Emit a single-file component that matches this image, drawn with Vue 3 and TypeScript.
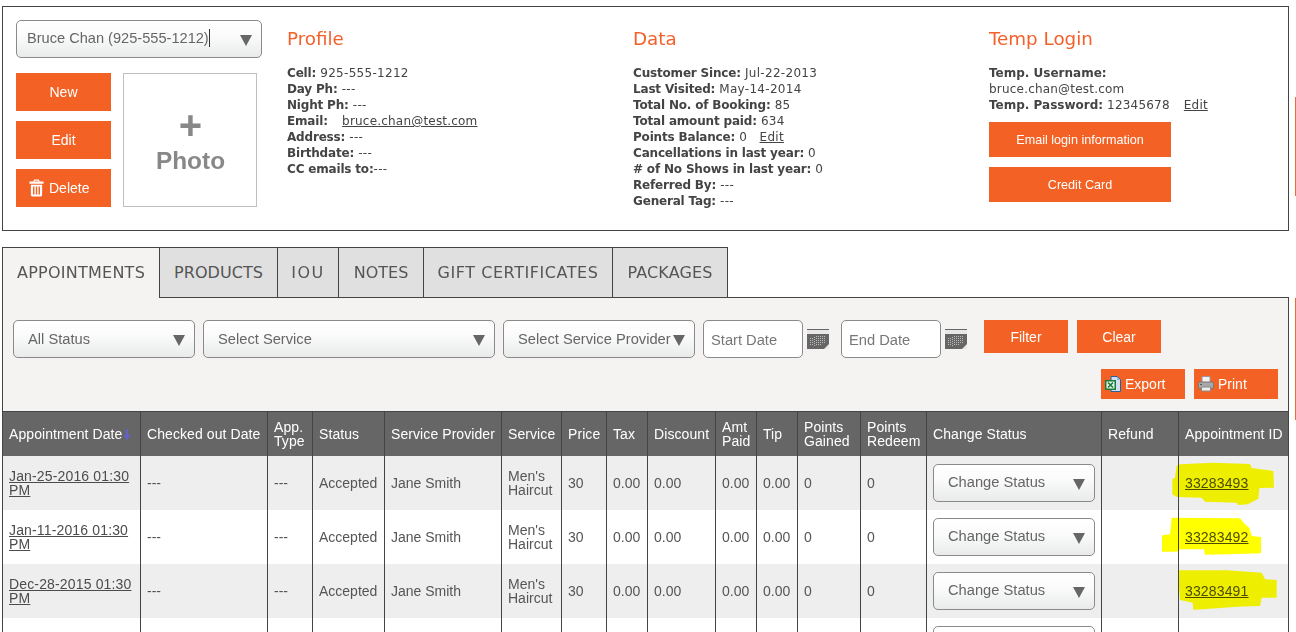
<script setup lang="ts">
const tabs = [
  { label: 'APPOINTMENTS', width: 158, spacing: 0.25 },
  { label: 'PRODUCTS', width: 118, spacing: 0.05 },
  { label: 'IOU', width: 61, spacing: 1.5 },
  { label: 'NOTES', width: 85, spacing: 0 },
  { label: 'GIFT CERTIFICATES', width: 189, spacing: 0.55 },
  { label: 'PACKAGES', width: 115, spacing: 0.1 },
]
const colWidths: number[] = [138, 127, 45, 72, 117, 60, 45, 41, 68, 41, 41, 63, 66, 175, 77, 109]
const rows = [
  { date: 'Jan-25-2016 01:30 PM', id: '33283493' },
  { date: 'Jan-11-2016 01:30 PM', id: '33283492' },
  { date: 'Dec-28-2015 01:30 PM', id: '33283491' },
]
</script>

<template>
  <div class="page">
    <span class="edge edge-a"></span>
    <span class="edge edge-b"></span>

    <section class="card">
      <div class="left">
        <div class="sel top-sel"><span class="sel-text">Bruce Chan (925-555-1212)<i class="caret"></i></span><span class="tri"></span></div>
        <div class="left-row">
          <div class="left-btns">
            <button class="btn side">New</button>
            <button class="btn side">Edit</button>
            <button class="btn side del">
              <svg class="trash" viewBox="0 0 16 18" width="15" height="18">
                <path fill="#fff" d="M5.500 0h5l1 2H15.500v2.500H.5V2h4zM2 5.500h12v11a1.500 1.500 0 0 1-1.500 1.500h-9A1.500 1.500 0 0 1 2 16.500z" />
                <path fill="#f4621f" d="M6 1.200h4l.4.8H5.600zM4.300 7.500h1.500v8.500H4.300zM7.250 7.500h1.500v8.500h-1.500zM10.200 7.500h1.500v8.500h-1.500z" />
              </svg>
              Delete
            </button>
          </div>
          <div class="photo"><span class="plus">+</span><span class="photo-label">Photo</span></div>
        </div>
      </div>

      <div class="info">
        <h2>Profile</h2>
        <p><b>Cell:</b> 925-555-1212</p>
        <p><b>Day Ph:</b> ---</p>
        <p><b>Night Ph:</b> ---</p>
        <p><b>Email:</b> &nbsp; <a class="mail">bruce.chan@test.com</a></p>
        <p><b>Address:</b> ---</p>
        <p><b>Birthdate:</b> ---</p>
        <p><b>CC emails to:</b>---</p>
      </div>

      <div class="info">
        <h2>Data</h2>
        <p><b>Customer Since:</b> Jul-22-2013</p>
        <p><b>Last Visited:</b> May-14-2014</p>
        <p><b>Total No. of Booking:</b> 85</p>
        <p><b>Total amount paid:</b> 634</p>
        <p><b>Points Balance:</b> 0 &nbsp; <a>Edit</a></p>
        <p><b>Cancellations in last year:</b> 0</p>
        <p><b># of No Shows in last year:</b> 0</p>
        <p><b>Referred By:</b> ---</p>
        <p><b>General Tag:</b> ---</p>
      </div>

      <div class="info temp">
        <h2>Temp Login</h2>
        <p><b>Temp. Username:</b></p>
        <p>bruce.chan@test.com</p>
        <p><b>Temp. Password:</b> 12345678 &nbsp; <a>Edit</a></p>
        <button class="btn login first">Email login information</button>
        <button class="btn login">Credit Card</button>
      </div>
    </section>

    <nav class="tabs">
      <div
        v-for="(t, i) in tabs"
        :key="t.label"
        class="tab"
        :class="{ active: i === 0 }"
        :style="{ width: t.width + 'px', letterSpacing: t.spacing + 'px' }"
      >{{ t.label }}</div>
    </nav>

    <section class="panel">
      <div class="filters">
        <div class="sel f1"><span class="sel-text">All Status</span><span class="tri"></span></div>
        <div class="sel f2"><span class="sel-text">Select Service</span><span class="tri"></span></div>
        <div class="sel f3"><span class="sel-text">Select Service Provider</span><span class="tri"></span></div>
        <input class="date" placeholder="Start Date" />
        <svg class="cal" viewBox="0 0 22 20" width="22" height="20">
          <rect width="22" height="20" fill="#666" />
          <rect y="1" width="22" height="4" fill="#e8e8e8" />
          <path stroke="#bbb" stroke-width="1" stroke-dasharray="1 1" d="M3.500 9v8M5.500 9v8M7.500 8v9M9.500 7v10M11.500 7v10M13.500 7v10M15.500 7v8M17.500 7v7" fill="none" />
          <path d="M22 15v5h-5z" fill="#e8e8e8" />
        </svg>
        <input class="date second" placeholder="End Date" />
        <svg class="cal" viewBox="0 0 22 20" width="22" height="20">
          <rect width="22" height="20" fill="#666" />
          <rect y="1" width="22" height="4" fill="#e8e8e8" />
          <path stroke="#bbb" stroke-width="1" stroke-dasharray="1 1" d="M3.500 9v8M5.500 9v8M7.500 8v9M9.500 7v10M11.500 7v10M13.500 7v10M15.500 7v8M17.500 7v7" fill="none" />
          <path d="M22 15v5h-5z" fill="#e8e8e8" />
        </svg>
        <button class="btn act filter">Filter</button>
        <button class="btn act clear">Clear</button>
      </div>

      <div class="exports">
        <button class="btn exp">
          <svg viewBox="0 0 16 16" width="16" height="16">
            <path fill="#cfe0f2" stroke="#2a5f9e" d="M6 .5h6l3.500 3v12H6z" />
            <path fill="#8fb4dc" d="M12 1v3h3z" />
            <rect x="0" y="4" width="11" height="10" fill="#1a7a3c" />
            <rect x="1.500" y="5.500" width="8" height="7" fill="#e8f3ea" />
            <path stroke="#1a7a3c" stroke-width="1.600" d="M3 6.500l5 5M8 6.500l-5 5" />
          </svg>
          Export
        </button>
        <button class="btn exp">
          <svg viewBox="0 0 16 16" width="16" height="16">
            <path fill="#f2f2f2" stroke="#999" d="M4 .5h8v6H4z" />
            <rect x="0.500" y="6" width="15" height="6.500" rx="1.500" fill="#a8a8a8" stroke="#777" />
            <rect x="3.500" y="11" width="9" height="4" fill="#eee" stroke="#888" />
            <rect x="2" y="8" width="2" height="1" fill="#555" />
          </svg>
          Print
        </button>
      </div>

      <div class="table-wrap">
        <table>
          <colgroup>
            <col v-for="(w, i) in colWidths" :key="i" :style="{ width: w + 'px' }" />
          </colgroup>
          <thead>
            <tr>
              <th>Appointment Date<svg class="sort" viewBox="0 0 10 11" width="10" height="11"><path fill="#6262c8" d="M4 0h2v6h3L5 11 1 6h3z" /></svg></th>
              <th>Checked out Date</th>
              <th>App.<br />Type</th>
              <th>Status</th>
              <th>Service Provider</th>
              <th>Service</th>
              <th>Price</th>
              <th>Tax</th>
              <th>Discount</th>
              <th>Amt<br />Paid</th>
              <th>Tip</th>
              <th>Points<br />Gained</th>
              <th>Points<br />Redeem</th>
              <th>Change Status</th>
              <th>Refund</th>
              <th>Appointment ID</th>
            </tr>
          </thead>
          <tbody>
            <tr v-for="r in rows" :key="r.id">
              <td><a>{{ r.date }}</a></td>
              <td>---</td>
              <td>---</td>
              <td>Accepted</td>
              <td>Jane Smith</td>
              <td>Men's<br />Haircut</td>
              <td>30</td>
              <td>0.00</td>
              <td>0.00</td>
              <td>0.00</td>
              <td>0.00</td>
              <td>0</td>
              <td>0</td>
              <td><div class="sel status"><span class="sel-text">Change Status</span><span class="tri"></span></div></td>
              <td></td>
              <td><a>{{ r.id }}</a></td>
            </tr>
            <tr>
              <td></td><td></td><td></td><td></td><td></td><td></td><td></td><td></td>
              <td></td><td></td><td></td><td></td><td></td>
              <td><div class="sel status"></div></td>
              <td></td><td></td>
            </tr>
          </tbody>
        </table>
        <svg class="marker" viewBox="0 0 390 480" width="130" height="160">
          <polygon points="50,30 60,25 160,20 270,24 275,36 340,45 342,95 298,96 295,128 263,145 235,147 230,140 135,137 125,125 50,123 37,115 37,70 45,65" />
          <polygon points="35,185 120,186 240,187 255,205 268,215 275,240 303,243 303,292 200,295 135,296 132,280 60,280 50,287 6,287 6,238 30,235 33,210" />
          <polygon points="57,343 130,343 200,343 305,350 315,370 350,372 350,425 305,425 300,450 230,452 130,460 100,461 98,440 60,432 57,395" />
        </svg>
      </div>
    </section>
  </div>
</template>

<style>
html, body { margin: 0; background: #fff; overflow: hidden; height: 632px; }
</style>

<style scoped>
.page {
  position: relative;
  box-sizing: border-box;
  width: 1296px;
  height: 632px;
  overflow: hidden;
  padding: 6px 0 0 2px;
  font-family: "Liberation Sans", Arial, sans-serif;
  color: #555;
}
.edge { position: absolute; left: 1295px; width: 1px; background: #e2703c; }
.edge-a { top: 97px; height: 99px; }
.edge-b { top: 298px; height: 122px; }

.card {
  box-sizing: border-box;
  width: 1287px;
  height: 225px;
  border: 1px solid #444;
  padding: 13px 0 0 13px;
  display: grid;
  grid-template-columns: 271px 346px 356px 1fr;
}
.left { width: 246px; }
.left-row { display: flex; margin-top: 15px; }
.left-btns { display: flex; flex-direction: column; gap: 10px; width: 95px; }
.photo {
  box-sizing: border-box;
  width: 134px;
  height: 134px;
  margin-left: 12px;
  padding-left: 1px;
  border: 1px solid #c4bfba;
  display: flex;
  flex-direction: column;
  align-items: center;
  color: #888;
  font-weight: bold;
}
.plus { font-size: 40px; line-height: 36px; margin-top: 33px; }
.photo-label { font-size: 24.4px; line-height: 28px; margin-top: 4px; }

.btn {
  border: 0;
  margin: 0;
  padding: 0;
  background: #f46124;
  color: #fff;
  font: 14px "Liberation Sans", Arial, sans-serif;
  display: flex;
  align-items: center;
  justify-content: center;
}
.side { width: 95px; height: 38px; }
.del { justify-content: flex-start; padding-left: 13px; }
.trash { margin-right: 5px; }
.login { width: 182px; height: 35px; font-size: 12.6px; margin-top: 10px; }
.login.first { margin-top: 9px; }

.sel {
  box-sizing: border-box;
  display: flex;
  align-items: center;
  justify-content: space-between;
  height: 38px;
  border: 1px solid #8a8a8a;
  border-radius: 5px;
  background: linear-gradient(#fff 0%, #fbfbfb 40%, #f3f4f4 65%, #e9ebeb 100%);
  padding: 0 9px 0 14px;
  font-size: 14.7px;
  color: #666;
}
.sel-text { white-space: nowrap; padding-bottom: 2px; }
.filters .sel-text { padding-bottom: 0; }
.top-sel { width: 246px; padding-left: 10px; font-size: 14.6px; }
.caret { display: inline-block; width: 1px; height: 18px; background: #333; vertical-align: -4px; }
.tri {
  width: 0;
  height: 0;
  margin-left: auto;
  border-left: 6px solid transparent;
  border-right: 6px solid transparent;
  border-top: 11px solid #666;
  margin-top: 2px;
}

.info { padding-top: 9px; font-family: "DejaVu Sans", Verdana, sans-serif; font-size: 12px; line-height: 16px; color: #444; letter-spacing: 0.3px; }
.info h2 { margin: 0 0 16px; font-size: 18.3px; line-height: 20px; font-weight: normal; color: #f4602a; letter-spacing: 0; }
.info p { margin: 0; white-space: nowrap; }
.info b { color: #444; letter-spacing: -0.18px; }
.info a, td a { text-decoration: underline; }
.info .mail { margin-left: 2px; letter-spacing: 0.2px; }
.temp { letter-spacing: 0.2px; }
.temp b { letter-spacing: 0; }
.temp a { margin-left: 2px; }

.tabs { display: flex; margin-top: 16px; height: 50px; box-sizing: border-box; }
.tab {
  box-sizing: border-box;
  height: 51px;
  background: #e0e0e0;
  border: 1px solid #444;
  border-left: 0;
  display: flex;
  align-items: center;
  justify-content: center;
  font-family: "DejaVu Sans", Verdana, sans-serif;
  font-size: 16px;
  color: #555;
  position: relative;
  z-index: 1;
}
.tab.active { background: #f4f3f2; border-bottom: 0; border-left: 1px solid #444; z-index: 2; padding-bottom: 1px; }

.panel {
  box-sizing: border-box;
  width: 1287px;
  height: 340px;
  border: 1px solid #444;
  background: #f4f3f2;
}
.filters { display: flex; align-items: flex-start; padding: 22px 0 0 10px; }
.f1 { width: 182px; }
.f2 { width: 292px; margin-left: 8px; }
.f3 { width: 192px; margin-left: 8px; padding-right: 9px; }
.date {
  box-sizing: border-box;
  width: 100px;
  height: 38px;
  margin-left: 8px;
  padding: 2px 0 0 7px;
  border: 1px solid #8a8a8a;
  border-radius: 5px;
  background: #fff;
  font: 14.7px "Liberation Sans", Arial, sans-serif;
  outline: none;
}
.date::placeholder { color: #777; opacity: 1; }
.date.second { margin-left: 12px; }
.cal { margin: 9px 0 0 4px; }
.act { width: 84px; height: 33px; }
.filter { margin-left: 17px; }
.clear { margin-left: 9px; }

.exports { display: flex; justify-content: flex-end; gap: 9px; margin-top: 11px; padding-right: 10px; }
.exp { width: 84px; height: 30px; gap: 4px; justify-content: flex-start; padding-left: 4px; }

.table-wrap { position: relative; margin-top: 12px; }
table {
  border-collapse: separate;
  border-spacing: 0;
  table-layout: fixed;
  width: 1285px;
  font-size: 14px;
  line-height: 14px;
  border-top: 1px solid #444;
}
th {
  height: 44px;
  box-sizing: border-box;
  padding: 0 0 0 6px;
  background: #666;
  color: #fff;
  font-weight: normal;
  text-align: left;
  border-right: 1px solid #444;
  white-space: nowrap;
  letter-spacing: 0.08px;
}
td {
  height: 54px;
  box-sizing: border-box;
  padding: 0 6px;
  border-right: 1px solid #444;
  color: #555;
}
td a { color: #4c4c4c; letter-spacing: 0.15px; }
th:last-child, td:last-child { border-right: 0; }
tbody tr:nth-child(odd) td { background: #eee; }
tbody tr:nth-child(even) td { background: #fff; }
.sort { vertical-align: -1px; }
.status { width: 162px; }
.marker {
  position: absolute;
  left: 1157px;
  top: 45px;
  mix-blend-mode: multiply;
  pointer-events: none;
  fill: #ff0;
}
</style>
